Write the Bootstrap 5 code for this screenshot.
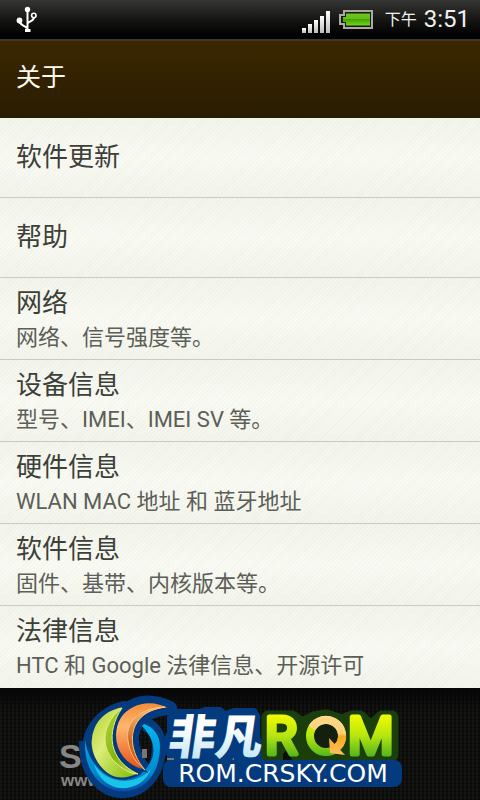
<!DOCTYPE html>
<html lang="zh-CN">
<head>
<meta charset="utf-8">
<meta name="viewport" content="width=device-width, initial-scale=1">
<title>关于</title>
<link href="https://cdn.jsdelivr.net/npm/bootstrap@5.3.0/dist/css/bootstrap.min.css" rel="stylesheet">
<style>
  body { font-family: Roboto, "Noto Sans CJK SC", sans-serif; background: #0c0d0c; }
  .status { height: 39px; color: #f0f0f0; background: linear-gradient(#353533, #10110f 60%, #000 92%); padding: 0 10px 0 16px; }
  .status svg { flex: none; }
  .battery { margin-left: 8px; }
  .status-period { font-size: 16px; line-height: 24px; margin-left: 11px; }
  .status-clock { font-size: 24px; line-height: 24px; margin-left: 7px; padding-bottom: 2px; }
  .title-bar { height: 79px; padding-bottom: 4px; border-top: 2px solid #40382a; background: linear-gradient(#3b2700, #2e1f02 75%, #291c00); }
  .title-bar h1 { font-size: 25px; line-height: 36px; color: #fffaf0; }
  .settings { --bs-list-group-bg: transparent; }
  .settings .entry {
    padding: 6px 16px 0; border: 0; border-bottom: 1px solid #c9cac0; color: #3d3f39;
    background: repeating-linear-gradient(135deg, rgba(120,125,90,.04) 0 1px, transparent 1px 3px), linear-gradient(#f3f4eb, #f9faf3 50%, #f3f4eb);
    min-height: 82px;
  }
  .settings .entry-single { min-height: 80px; padding: 0 16px 2px; }
  .settings .entry:last-child { border-bottom-color: #f0f1e9; }
  .entry-name { font-size: 26px; line-height: 38px; }
  .entry-note { font-size: 22px; line-height: 32px; color: #5c5e58; }
  .brand { min-height: 112px; background: linear-gradient(#050605, transparent 24px), repeating-linear-gradient(0deg, rgba(0,0,0,.35) 0 1px, transparent 1px 4px), repeating-linear-gradient(90deg, #151614 0 2px, #0d0e0c 2px 4px); }
</style>
<script src="https://cdn.jsdelivr.net/npm/bootstrap@5.3.0/dist/js/bootstrap.bundle.min.js"></script>
</head>
<body class="min-vh-100 d-flex flex-column">
<div class="status d-flex align-items-center">
  <svg width="22" height="28" viewBox="0 0 22 28" fill="none" stroke="#fff" stroke-width="2" role="img" aria-label="USB">
    <path d="M11.500 4V25M3.500 15C3.500 19 8 19 11 22M18 11C18 15 14 15 12 17" />
    <path d="M9 24.500H14.500" stroke-width="3"/><circle cx="11.500" cy="3.500" r="2.700" fill="#fff" stroke="none"/>
    <circle cx="3.500" cy="14.500" r="2.900" fill="#fff" stroke="none"/><circle cx="17.800" cy="9.500" r="2.200" stroke-width="1.600"/>
  </svg>
  <svg class="ms-auto mt-1" width="29" height="24" viewBox="0 0 29 24" role="img" aria-label="信号">
    <defs><linearGradient id="bars" x2="0" y2="1"><stop stop-color="#fff"/><stop offset="1" stop-color="#bbb"/></linearGradient></defs>
    <g fill="url(#bars)"><rect y="18" width="4" height="5"/><rect x="6" y="14" width="4" height="9"/><rect x="12" y="10" width="4" height="13"/><rect x="18" y="6" width="4" height="17"/><rect x="24" y="1" width="4" height="22"/></g>
  </svg>
  <svg class="battery" width="35" height="20" viewBox="0 0 35 20" role="img" aria-label="电池">
    <defs><linearGradient id="cell" x2="0" y2="1"><stop stop-color="#6fc51f"/><stop offset=".45" stop-color="#62bd13"/><stop offset=".5" stop-color="#47a303"/><stop offset="1" stop-color="#71d51c"/></linearGradient></defs>
    <path d="M5 1H33V18H5V14H1V5H5Z" fill="#151b10" stroke="#aaa9a6" stroke-width="2"/>
    <path d="M7 3.500H31V15.500H7V12H4V7H7Z" fill="url(#cell)"/>
  </svg>
  <span class="status-period">下午</span><span class="status-clock">3:51</span>
</div>
<header class="title-bar d-flex align-items-center px-3"><h1 class="m-0 fw-normal">关于</h1></header>
<main>
  <div class="list-group list-group-flush settings">
    <a href="#update" class="list-group-item list-group-item-action entry entry-single d-flex flex-column justify-content-center"><span class="entry-name">软件更新</span></a>
    <a href="#help" class="list-group-item list-group-item-action entry entry-single d-flex flex-column justify-content-center"><span class="entry-name">帮助</span></a>
    <a href="#network" class="list-group-item list-group-item-action entry d-flex flex-column"><span class="entry-name">网络</span><span class="entry-note">网络、信号强度等。</span></a>
    <a href="#phone" class="list-group-item list-group-item-action entry d-flex flex-column"><span class="entry-name">设备信息</span><span class="entry-note">型号、IMEI、IMEI SV 等。</span></a>
    <a href="#hardware" class="list-group-item list-group-item-action entry d-flex flex-column"><span class="entry-name">硬件信息</span><span class="entry-note">WLAN MAC 地址 和 蓝牙地址</span></a>
    <a href="#software" class="list-group-item list-group-item-action entry d-flex flex-column"><span class="entry-name">软件信息</span><span class="entry-note">固件、基带、内核版本等。</span></a>
    <a href="#legal" class="list-group-item list-group-item-action entry d-flex flex-column"><span class="entry-name">法律信息</span><span class="entry-note">HTC 和 Google 法律信息、开源许可</span></a>
  </div>
</main>
<footer class="brand flex-grow-1">
  <svg class="d-block" width="480" height="112" viewBox="0 0 480 112" role="img" aria-label="非凡ROM">
    <defs>
      <linearGradient id="lime" gradientUnits="userSpaceOnUse" x1="0" x2="0" y1="27" y2="68"><stop stop-color="#f0fa00"/><stop offset=".5" stop-color="#b8e610"/><stop offset="1" stop-color="#55b51c"/></linearGradient>
      <linearGradient id="ice" gradientUnits="userSpaceOnUse" x1="0" x2="0" y1="25" y2="70"><stop offset=".3" stop-color="#fff"/><stop offset="1" stop-color="#c4e6fa"/></linearGradient>
      <linearGradient id="leaf" x2="1" y2="1"><stop stop-color="#a9cc22"/><stop offset=".4" stop-color="#dced79"/><stop offset="1" stop-color="#7ab800"/></linearGradient>
      <linearGradient id="leafIn" x2="1" y2="1"><stop stop-color="#b9da35"/><stop offset=".5" stop-color="#85b40c"/><stop offset="1" stop-color="#c5df38"/></linearGradient>
      <linearGradient id="flame" x2="0" y2="1"><stop stop-color="#f58b35"/><stop offset=".35" stop-color="#ffb66e"/><stop offset="1" stop-color="#e84b12"/></linearGradient>
      <linearGradient id="flameIn" x2="0" y2="1"><stop stop-color="#ffbd76"/><stop offset=".55" stop-color="#cf661d"/><stop offset="1" stop-color="#ef4c0b"/></linearGradient>
      <linearGradient id="sea" x2="0" y2="1"><stop stop-color="#00b6ed"/><stop offset=".7" stop-color="#008bd0"/><stop offset="1" stop-color="#074ea8"/></linearGradient>
      <linearGradient id="gold" gradientUnits="userSpaceOnUse" x1="0" x2="0" y1="27" y2="68"><stop stop-color="#ffd98a"/><stop offset=".45" stop-color="#ffcf7a"/><stop offset=".52" stop-color="#f9a91c"/><stop offset="1" stop-color="#ffc16a"/></linearGradient>
    </defs>
    <g fill="#858685" font-family="Liberation Sans, sans-serif" font-weight="700"><text x="59" y="80" font-size="34">S</text><text x="61" y="98" font-size="17">www.</text></g>
    <!-- crescent emblem -->
    <g fill="none" stroke="#033b7e" stroke-width="14" stroke-linejoin="round">
      <path d="M86 53C84 118 158 120 159 58C159 47 153 38 144 36"/>
      <path d="M124 20C83 30 77 80 112 89L139 87C108 75 105 45 124 20Z" fill="#033b7e"/>
      <path d="M170 20C140 6 116 22 116 45C116 67 130 80 145 83C128 64 120 24 170 20Z" fill="#033b7e"/>
    </g>
    <path d="M142 61H147V70H142Z" fill="#777"/>
    <path d="M85 52C82 118 160 121 160 58C160 48 154 39 144 36L142 38C153 49 157 63 150 75C133 105 91 92 85 52Z" fill="url(#sea)"/>
    <path d="M94 76C109 99 138 96 151 81C145 98 125 104 112 98C103 94 96 85 94 76Z" fill="#18c5e8"/>
    <path d="M124 18C92 23 83 54 97 75C107 90 121 95 139 86C108 73 105 43 124 18Z" fill="url(#leaf)" stroke="#033b7e" stroke-width="2"/>
    <path d="M122 20C98 38 98 70 131 85L138 86C108 72 106 44 122 20Z" fill="url(#leafIn)" stroke="#e0ec87"/>
    <path d="M171 20C143 6 116 20 115 47C115 65 126 78 145 83C125 63 121 23 171 20Z" fill="url(#flame)" stroke="#033b7e" stroke-width="2"/>
    <path d="M165 19C137 20 125 36 128 53C130 67 137 76 145 82C127 62 124 25 165 19Z" fill="url(#flameIn)" stroke="#ffc17b"/>
    <!-- wordmark backing -->
    <path d="M176 24H200L205 22H220L225 26L234 23H254L257 28V50L264 64V78H170V66L166 64V54L170 44V29Z" fill="#033b7e" stroke="#033b7e" stroke-width="6" stroke-linejoin="round"/>
    <path d="M167 70H174V72H167ZM230 75L234 69V75Z" fill="#777"/>
    <path d="M272 29H292L302 36L314 30L326 28L342 33L352 29H360L371 39L382 29H392V67H268V29Z" fill="#1b3f0a" stroke="#1b3f0a" stroke-width="13" stroke-linejoin="round"/>
    <path d="M283 74V66L287 61L293 74Z" fill="#0c0d0c"/>
    <rect x="163" y="72" width="239" height="27" rx="8" fill="#033b7e"/>
    <text x="176" y="66" transform="skewX(-8)" font-family="Noto Sans CJK SC, sans-serif" font-weight="900" font-size="47" fill="url(#ice)">非凡</text>
    <g font-family="Roboto, sans-serif" font-weight="400" font-size="52" fill="url(#lime)" stroke="url(#lime)" stroke-width="5" stroke-linejoin="round"><text x="265" y="66">R</text><text x="348" y="66">M</text></g>
    <circle cx="326" cy="48" r="16" fill="#14200f" stroke="url(#lime)" stroke-width="8"/>
    <path d="M312 40A16 16 0 0 1 340 56L336 60" fill="none" stroke="url(#gold)" stroke-width="8"/>
    <path d="M329 50L345 67L330 65Z" fill="url(#gold)"/>
    <text x="283" y="94" text-anchor="middle" font-family="DejaVu Sans, sans-serif" font-size="25" fill="#fff">ROM.CRSKY.COM</text>
  </svg>
</footer>
</body>
</html>
